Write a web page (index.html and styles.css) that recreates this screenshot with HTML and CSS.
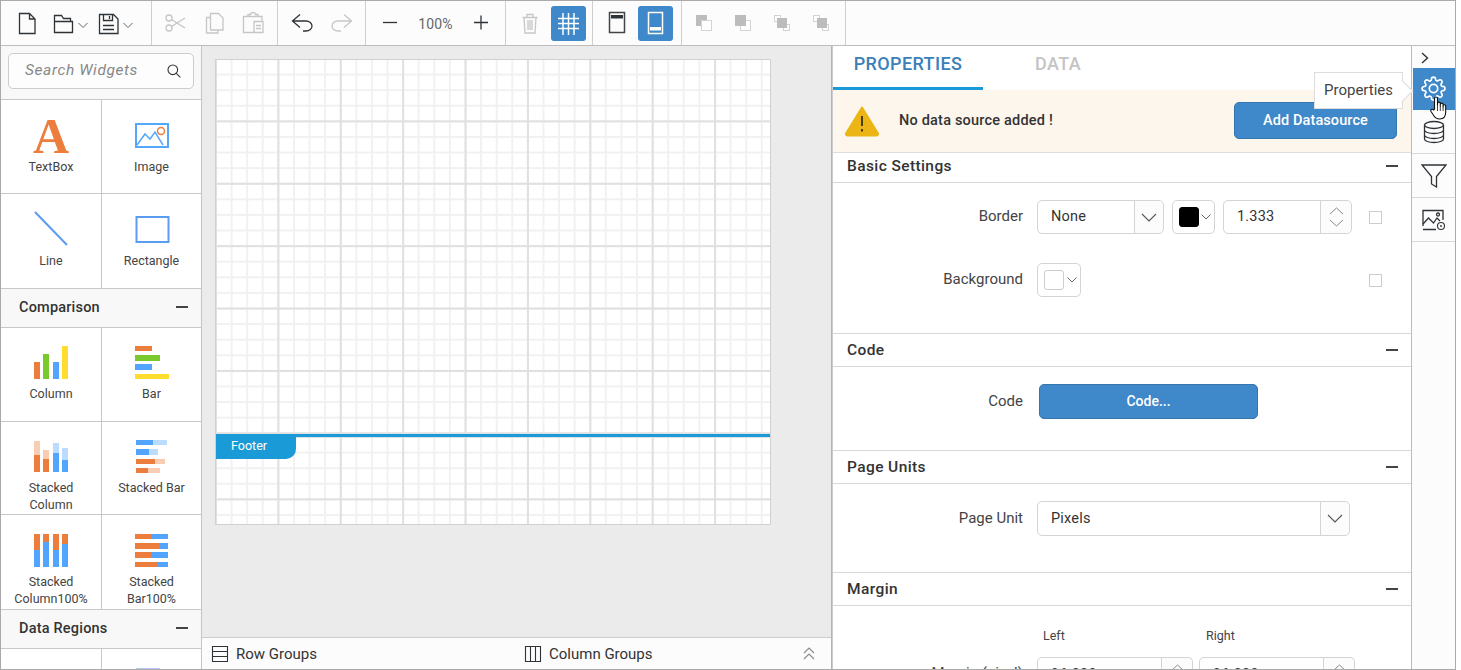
FILE: index.html
```html
<!DOCTYPE html>
<html lang="en">
<head>
    <meta charset="UTF-8">
    <title>Report Designer</title>
    <link rel="stylesheet" href="styles.css">
</head>
<body>
<div class="app">
    <!-- Toolbar -->
    <div class="toolbar">
        <div class="tool-group group-file">
            <div class="tool"><svg width="35" height="35"><path class="ink" d="M9.5 7.5h10l5.5 5.5v14.5H9.5z M19.5 7.5V13H25"/></svg></div>
            <div class="tool tool-drop"><svg width="38" height="35"><path class="ink" d="M2.5 26.5v-17h7l2 3h7v3 M2.5 15.5h18v11h-18z"/><path class="thin" d="M26.5 17l4.5 4.5 4.5-4.5"/></svg></div>
            <div class="tool tool-drop"><svg width="38" height="35"><path class="ink" d="M2.5 8.5h14l4.5 4.5v14.500H2.500z M6.500 8.500v6h9v-6 M12.500 10v3 M6 19.500h11 M6 23.500h11"/><path class="thin" d="M26.500 17l4.500 4.500 4.500-4.500"/></svg></div>
        </div>
        <div class="tool-group group-edit">
            <div class="tool"><svg width="35" height="35"><g class="off"><circle cx="11" cy="12" r="3"/><circle cx="11" cy="22" r="3"/><path d="M13.500 13.500L27 22 M13.500 20.500L27 12"/></g></svg></div>
            <div class="tool"><svg width="35" height="35"><path class="off" d="M13.500 7.500h8l4.500 4.500v12H13.500z M13.500 11.500H9.500v15.500H21v-3"/></svg></div>
            <div class="tool"><svg width="35" height="35"><path class="off" d="M18 26.500H7.500v-16H12v-2h2.500a2.500 2 0 0 1 5 0H22v2h4v4 M12 10.500h10 M18 15.500h9v11h-9z M20 19.500h5 M20 22.500h5"/></svg></div>
        </div>
        <div class="tool-group group-history">
            <div class="tool"><svg width="35" height="35"><path class="ink" d="M15 8.500L7.500 15 15 21.500 M7.500 15H21c3.500 0 6 2.300 6 5s-2.500 5-6 5h-3"/></svg></div>
            <div class="tool"><svg width="35" height="35"><path class="off" d="M20 8.500L27.500 15 20 21.500 M27.500 15H14c-3.500 0-6 2.300-6 5s2.500 5 6 5h3"/></svg></div>
        </div>
        <div class="tool-group group-zoom">
            <div class="tool"><svg width="35" height="35"><path class="ink" d="M10 16.500h14"/></svg></div>
            <span class="zoom-value">100%</span>
            <div class="tool"><svg width="35" height="35"><path class="ink" d="M11 16.500h14 M18 9.500v14"/></svg></div>
        </div>
        <div class="tool-group group-view">
            <div class="tool"><svg width="35" height="35"><path class="off" d="M9.500 11.500h15 M11 11.500l1 15.500h10l1-15.500 M14 8.500h6v3h-6z M15 14v10 M17 14v10 M19 14v10"/></svg></div>
            <div class="tool tool-active"><svg width="35" height="35"><path class="white" d="M7 12.500h21 M7 17.500h21 M7 22.500h21 M12 7v22 M17.500 7v22 M23 7v22"/></svg></div>
        </div>
        <div class="tool-group group-band">
            <div class="tool"><svg width="35" height="35"><rect class="ink-soft" x="9.500" y="6.500" width="15" height="20"/><rect x="11" y="9" width="12" height="3.500" fill="#2e3338"/></svg></div>
            <div class="tool tool-active"><svg width="35" height="35"><rect class="white" x="10.500" y="6.500" width="14" height="21"/><rect x="12" y="21" width="11" height="3.500" fill="#fff"/></svg></div>
        </div>
        <div class="tool-group group-order">
            <div class="tool"><svg width="35" height="35"><rect x="10" y="9" width="11" height="11" fill="#bcbcbc"/><rect class="box" x="15.500" y="14.500" width="10" height="10"/></svg></div>
            <div class="tool"><svg width="35" height="35"><rect class="box" x="15.500" y="14.500" width="10" height="10"/><rect x="10" y="9" width="11" height="11" fill="#bcbcbc"/></svg></div>
            <div class="tool"><svg width="35" height="35"><rect class="box" x="10.500" y="9.500" width="6" height="6"/><rect class="box" x="19.500" y="18.500" width="6" height="6"/><rect x="13" y="12" width="10" height="10" fill="#bcbcbc"/></svg></div>
            <div class="tool"><svg width="35" height="35"><rect class="box" x="10.500" y="9.500" width="6" height="6"/><rect class="box" x="19.500" y="18.500" width="6" height="6"/><rect x="14" y="12" width="10" height="10" fill="#bcbcbc"/></svg></div>
        </div>
    </div>

    <div class="main">
        <!-- Widgets -->
        <div class="widgets">
            <div class="search-wrap">
                <div class="search">
                    <span>Search Widgets</span>
                    <svg width="14" height="14"><circle class="ink-thin" cx="5.800" cy="5.800" r="4.800"/><path class="ink-thin" d="M9.300 9.300l4 4"/></svg>
                </div>
            </div>
            <div class="widget-grid">
                <div class="cell"><div class="icon"><span class="letter-a">A</span></div><span>TextBox</span></div>
                <div class="cell"><div class="icon"><svg width="36" height="36"><rect x="2" y="7" width="32" height="23" fill="none" stroke="#55a7fb" stroke-width="2"/><path d="M3 28l8-11 5 5 5-7 8 13" fill="none" stroke="#55a7fb" stroke-width="1.500"/><circle cx="27" cy="14" r="3.500" fill="none" stroke="#ed7d3c" stroke-width="1.500"/></svg></div><span>Image</span></div>
                <div class="cell cell-tall"><div class="icon"><svg width="36" height="36"><path d="M2 1l32 33" stroke="#5a9cf0" stroke-width="2"/></svg></div><span>Line</span></div>
                <div class="cell cell-tall"><div class="icon"><svg width="36" height="36"><rect x="2.500" y="6" width="32" height="25" fill="none" stroke="#5a9cf0" stroke-width="2"/></svg></div><span>Rectangle</span></div>
            </div>
            <div class="widget-head"><span>Comparison</span><i class="dash"></i></div>
            <div class="widget-grid">
                <div class="cell cell-snug"><div class="icon"><svg width="36" height="36"><rect x="1" y="17" width="6" height="17" fill="#ed7d3c"/><rect x="10" y="9" width="6" height="25" fill="#7ac92d"/><rect x="20" y="17" width="6" height="17" fill="#52a5ff"/><rect x="29" y="1" width="6" height="33" fill="#ffdc2e"/></svg></div><span>Column</span></div>
                <div class="cell cell-snug"><div class="icon"><svg width="36" height="36"><rect x="1" y="1" width="17" height="5" fill="#ed7d3c"/><rect x="1" y="10" width="25" height="6" fill="#7ac92d"/><rect x="1" y="19" width="17" height="6" fill="#52a5ff"/><rect x="1" y="29" width="34" height="5" fill="#ffdc2e"/></svg></div><span>Bar</span></div>
                <div class="cell cell-short cell-snug"><div class="icon"><svg width="36" height="36"><rect x="1" y="2" width="6" height="14" fill="#f8cdb4"/><rect x="1" y="16" width="6" height="17" fill="#ed7d3c"/><rect x="10" y="11" width="6" height="9" fill="#f8cdb4"/><rect x="10" y="20" width="6" height="13" fill="#ed7d3c"/><rect x="20" y="4" width="6" height="10" fill="#bcdcff"/><rect x="20" y="14" width="6" height="19" fill="#52a5ff"/><rect x="29" y="9" width="6" height="12" fill="#bcdcff"/><rect x="29" y="21" width="6" height="12" fill="#52a5ff"/></svg></div><span>Stacked Column</span></div>
                <div class="cell cell-short cell-snug"><div class="icon"><svg width="36" height="36"><rect x="2" y="1" width="17" height="5" fill="#52a5ff"/><rect x="19" y="1" width="14" height="5" fill="#bcdcff"/><rect x="2" y="10" width="13" height="6" fill="#52a5ff"/><rect x="15" y="10" width="9" height="6" fill="#bcdcff"/><rect x="2" y="20" width="19" height="5" fill="#ed7d3c"/><rect x="21" y="20" width="10" height="5" fill="#f8cdb4"/><rect x="2" y="29" width="12" height="5" fill="#ed7d3c"/><rect x="14" y="29" width="12" height="5" fill="#f8cdb4"/></svg></div><span>Stacked Bar</span></div>
                <div class="cell cell-tall"><div class="icon"><svg width="36" height="36"><rect x="1" y="2" width="6" height="16" fill="#ed7d3c"/><rect x="1" y="18" width="6" height="17" fill="#52a5ff"/><rect x="10" y="2" width="6" height="8" fill="#ed7d3c"/><rect x="10" y="10" width="6" height="25" fill="#52a5ff"/><rect x="20" y="2" width="6" height="16" fill="#ed7d3c"/><rect x="20" y="18" width="6" height="17" fill="#52a5ff"/><rect x="29" y="2" width="6" height="10" fill="#ed7d3c"/><rect x="29" y="12" width="6" height="23" fill="#52a5ff"/></svg></div><span>Stacked Column100%</span></div>
                <div class="cell cell-tall"><div class="icon"><svg width="36" height="36"><rect x="1" y="2" width="16" height="5" fill="#ed7d3c"/><rect x="17" y="2" width="17" height="5" fill="#52a5ff"/><rect x="1" y="11" width="25" height="6" fill="#ed7d3c"/><rect x="26" y="11" width="8" height="6" fill="#52a5ff"/><rect x="1" y="20" width="16" height="6" fill="#ed7d3c"/><rect x="17" y="20" width="17" height="6" fill="#52a5ff"/><rect x="1" y="30" width="22" height="5" fill="#ed7d3c"/><rect x="23" y="30" width="11" height="5" fill="#52a5ff"/></svg></div><span>Stacked Bar100%</span></div>
            </div>
            <div class="widget-head"><span>Data Regions</span><i class="dash"></i></div>
            <div class="widget-grid">
                <div class="cell"></div>
                <div class="cell"><div class="icon"><svg width="36" height="36"><rect x="2" y="2" width="24" height="20" fill="#b9c8f5"/></svg></div></div>
            </div>
        </div>

        <!-- Design surface -->
        <div class="center">
            <div class="canvas-wrap">
                <div class="surface">
                    <div class="band band-body"></div>
                    <div class="band band-footer"><div class="footer-tab">Footer</div></div>
                </div>
            </div>
            <div class="groups-bar">
                <div class="group-item group-row">
                    <svg width="18" height="18"><path class="ink-thin" d="M1.500 1.500h15v15h-15z M1.500 6.500h15 M1.500 11.500h15"/></svg>
                    <span>Row Groups</span>
                </div>
                <div class="group-item group-col">
                    <svg width="18" height="18"><path class="ink-thin" d="M1.500 1.500h15v15h-15z M6.500 1.500v15 M11.500 1.500v15"/></svg>
                    <span>Column Groups</span>
                    <svg class="collapse" width="12" height="14"><path d="M1 6l5-5 5 5 M1 12l5-5 5 5" fill="none" stroke="#8c8c8c" stroke-width="1.200"/></svg>
                </div>
            </div>
        </div>

        <!-- Properties -->
        <div class="props">
            <div class="tabs">
                <div class="tab tab-on">PROPERTIES</div>
                <div class="tab">DATA</div>
            </div>
            <div class="notice">
                <svg width="36" height="32"><path d="M18 2.500L34 28.500a1.500 1.500 0 0 1-1.300 2H3.300a1.500 1.500 0 0 1-1.300-2z" fill="#ecb516" stroke="#ecb516" stroke-width="2" stroke-linejoin="round"/><path d="M18 11v10 M18 24v2.500" stroke="#3a3010" stroke-width="1.800"/></svg>
                <span class="notice-text">No data source added !</span>
                <div class="btn btn-add">Add Datasource</div>
            </div>

            <div class="sec-head sec-head-first"><span>Basic Settings</span><i class="dash"></i></div>
            <div class="sec-body sec-basic">
                <div class="row row-border">
                    <label>Border</label>
                    <div class="field combo combo-border"><span>None</span><b><svg width="16" height="9"><path d="M1 1l7 7 7-7" fill="none" stroke="#555" stroke-width="1.100"/></svg></b></div>
                    <div class="field swatch"><i class="chip chip-black"></i><svg width="10" height="6"><path d="M.5.500l4.500 4.500 4.500-4.500" fill="none" stroke="#666"/></svg></div>
                    <div class="field spin spin-border"><span>1.333</span><b><svg width="15" height="8"><path d="M1 7l6.500-6 6.500 6" fill="none" stroke="#888"/></svg><svg width="15" height="8"><path d="M1 1l6.500 6 6.500-6" fill="none" stroke="#888"/></svg></b></div>
                    <i class="check"></i>
                </div>
                <div class="row row-bg">
                    <label>Background</label>
                    <div class="field swatch swatch-wide"><i class="chip"></i><svg width="10" height="6"><path d="M.5.500l4.500 4.500 4.500-4.500" fill="none" stroke="#666"/></svg></div>
                    <i class="check check-bg"></i>
                </div>
            </div>

            <div class="sec-head"><span>Code</span><i class="dash"></i></div>
            <div class="sec-body sec-code">
                <div class="row">
                    <label>Code</label>
                    <div class="btn btn-code">Code...</div>
                </div>
            </div>

            <div class="sec-head"><span>Page Units</span><i class="dash"></i></div>
            <div class="sec-body sec-units">
                <div class="row">
                    <label>Page Unit</label>
                    <div class="field combo combo-unit"><span>Pixels</span><b><svg width="16" height="9"><path d="M1 1l7 7 7-7" fill="none" stroke="#555" stroke-width="1.100"/></svg></b></div>
                </div>
            </div>

            <div class="sec-head"><span>Margin</span><i class="dash"></i></div>
            <div class="sec-body sec-margin">
                <div class="margin-labels"><span>Left</span><span>Right</span></div>
                <div class="row row-margin">
                    <label>Margin (pixel)</label>
                    <div class="field spin spin-margin"><span>96.000</span><b><svg width="15" height="8"><path d="M1 7l6.500-6 6.500 6" fill="none" stroke="#888"/></svg></b></div>
                    <div class="field spin spin-margin"><span>96.000</span><b><svg width="15" height="8"><path d="M1 7l6.500-6 6.500 6" fill="none" stroke="#888"/></svg></b></div>
                </div>
            </div>
        </div>

        <!-- Right rail -->
        <div class="rail">
            <div class="rail-top"><svg width="8" height="12"><path d="M1 1l5.500 5-5.500 5" fill="none" stroke="#2e3338" stroke-width="1.400"/></svg></div>
            <div class="rail-item rail-on">
                <svg width="25" height="25" viewBox="0 0 24 24" fill="none" stroke="#fff" stroke-width="1.600"><circle cx="12" cy="12" r="4"/><path d="M19.400 15a1.650 1.650 0 0 0 .33 1.820l.06.06a2 2 0 0 1 0 2.830 2 2 0 0 1-2.830 0l-.06-.06a1.650 1.650 0 0 0-1.820-.33 1.650 1.650 0 0 0-1 1.510V21a2 2 0 0 1-2 2 2 2 0 0 1-2-2v-.09A1.650 1.650 0 0 0 9 19.400a1.650 1.650 0 0 0-1.820.33l-.06.06a2 2 0 0 1-2.830 0 2 2 0 0 1 0-2.830l.06-.06a1.650 1.650 0 0 0 .33-1.820 1.650 1.650 0 0 0-1.510-1H3a2 2 0 0 1-2-2 2 2 0 0 1 2-2h.09A1.650 1.650 0 0 0 4.600 9a1.650 1.650 0 0 0-.33-1.820l-.06-.06a2 2 0 0 1 0-2.830 2 2 0 0 1 2.830 0l.06.06a1.650 1.650 0 0 0 1.820.33H9a1.650 1.650 0 0 0 1-1.510V3a2 2 0 0 1 2-2 2 2 0 0 1 2 2v.09a1.650 1.650 0 0 0 1 1.510 1.650 1.650 0 0 0 1.820-.33l.06-.06a2 2 0 0 1 2.830 0 2 2 0 0 1 0 2.830l-.06.06a1.650 1.650 0 0 0-.33 1.820V9a1.650 1.650 0 0 0 1.510 1H21a2 2 0 0 1 2 2 2 2 0 0 1-2 2h-.09a1.650 1.650 0 0 0-1.510 1z"/></svg>
            </div>
            <div class="rail-item">
                <svg width="22" height="24"><g class="ink"><ellipse cx="11" cy="5" rx="9.500" ry="3.500"/><path d="M1.500 5v14c0 2 4.300 3.500 9.500 3.500s9.500-1.500 9.500-3.500V5 M1.500 10c0 2 4.300 3.500 9.500 3.500s9.500-1.500 9.500-3.500 M1.500 15c0 2 4.300 3.500 9.500 3.500s9.500-1.500 9.500-3.500"/></g></svg>
            </div>
            <div class="rail-item">
                <svg width="26" height="24"><path class="ink" d="M1 1h24l-9.500 11.500V23l-5-3v-7.500z"/></svg>
            </div>
            <div class="rail-item">
                <svg width="24" height="22"><path class="ink" d="M1 17V1.500h20V11 M1 20.500h13"/><path class="ink" d="M1 15l5.500-6 5 5 3.500-5 3 3"/><circle class="ink" cx="16" cy="5.500" r="1.500"/><circle class="ink-thin" cx="19" cy="17" r="3.500"/><circle cx="19" cy="17" r="1" fill="#444"/></svg>
            </div>
            <div class="rail-rest"></div>
        </div>
    </div>

    <!-- Tooltip and mouse pointer over the rail -->
    <div class="tooltip">Properties</div>
    <svg class="hand" width="18" height="24" viewBox="0 0 18 24"><path d="M4.500 13V2.500a1.500 1.500 0 0 1 3 0V9l0-1.500a1.400 1.400 0 0 1 2.800 0V10l0-1.500a1.400 1.400 0 0 1 2.800 0V11l0-1a1.300 1.300 0 0 1 2.600 0v6c0 4-2 7-6 7-3 0-4.500-1-6-3.500L1 15.500c-1-1.700 1.500-3.300 2.500-1.500z" fill="#fff" stroke="#111" stroke-width="1.100" stroke-linejoin="round"/><path d="M7.500 9v6 M10.300 10v5 M13.100 11v4" stroke="#111" stroke-width=".8"/></svg>
</div>
</body>
</html>
```

FILE: styles.css
```css
* {
    box-sizing: border-box;
}
body {
    margin: 0;
    background-color: #fff;
    color: #333;
    font-family: Roboto, "Liberation Sans", sans-serif;
    font-size: 15px;
    overflow: hidden;
}
.app {
    position: relative;
    display: flex;
    flex-direction: column;
    width: 1456px;
    height: 670px;
    border: 1px solid #aaa;
    overflow: hidden;
}

/* svg stroke helpers */
.ink, .ink-soft, .ink-thin, .thin, .off, .off *, .white, .box {
    fill: none;
}
.ink { stroke: #2e3338; stroke-width: 1.300; }
.ink-soft { stroke: #444; stroke-width: 1.500; }
.ink-thin { stroke: #2e3338; stroke-width: 1.100; }
.thin { stroke: #666; stroke-width: 1; }
.off { stroke: #c6c6c6; stroke-width: 1.300; }
.white { stroke: #fff; stroke-width: 1.500; }
.box { stroke: #d4d4d4; stroke-width: 1; fill: #fff; }

/* toolbar */
.toolbar {
    display: flex;
    flex: none;
    height: 45px;
    background-color: #fcfcfc;
    border-bottom: 1px solid #bdbdbd;
}
.tool-group {
    display: flex;
    align-items: center;
    height: 44px;
    padding-top: 1px;
    border-right: 1px solid #cfcfcf;
}
.tool {
    flex: none;
    width: 35px;
    height: 35px;
    border-radius: 3px;
}
.tool svg {
    display: block;
}
.tool-drop {
    width: 38px;
}
.tool-active {
    background-color: #3f88c9;
}
.group-file { width: 151px; padding-left: 9px; gap: 14px; }
.group-file .tool-drop { margin-left: -7px; }
.group-edit { width: 126px; padding-left: 6px; gap: 4px; }
.group-history { width: 88px; padding-left: 7px; gap: 4px; }
.group-zoom { width: 140px; padding: 1px 7px 0; justify-content: space-between; }
.group-view { width: 87px; padding-left: 7px; gap: 3px; }
.group-band { width: 89px; padding-left: 7px; gap: 3px; }
.group-order { width: 164px; padding-left: 4px; gap: 4px; }
.zoom-value {
    color: #666;
    font-size: 14px;
    letter-spacing: .2px;
}

/* layout */
.main {
    display: flex;
    flex: 1;
    min-height: 0;
}

/* widgets panel */
.widgets {
    flex: none;
    width: 201px;
    border-right: 1px solid #c4c4c4;
    background-color: #fff;
    overflow: hidden;
}
.search-wrap {
    height: 54px;
    padding: 7px 7px 0;
    background-color: #f8f8f8;
    border-bottom: 1px solid #c8c8c8;
}
.search {
    display: flex;
    align-items: center;
    justify-content: space-between;
    height: 36px;
    padding: 0 12px 0 16px;
    background-color: #fdfdfd;
    border: 1px solid #ccc;
    border-radius: 5px;
    color: #888;
    font-size: 15.500px;
    font-style: italic;
    letter-spacing: .6px;
}
.search span {
    padding-bottom: 2px;
}
.widget-grid {
    display: grid;
    grid-template-columns: 101px 99px;
}
.cell {
    display: flex;
    flex-direction: column;
    align-items: center;
    height: 94px;
    padding: 17px 12px 0;
    border-bottom: 1px solid #c8c8c8;
    font-size: 12.500px;
    line-height: 17px;
    text-align: center;
    color: #444;
}
.cell:nth-child(odd) {
    border-right: 1px solid #c8c8c8;
}
.cell-short {
    height: 93px;
}
.cell-tall {
    height: 95px;
}
.icon {
    display: flex;
    justify-content: center;
    flex: none;
    width: 36px;
    height: 36px;
    margin-bottom: 5px;
}
.cell-snug .icon {
    margin-bottom: 4px;
}
.letter-a {
    margin-top: 1px;
    color: #ed7d3c;
    font-family: "Liberation Serif", serif;
    font-size: 50px;
    font-weight: 700;
    line-height: 36px;
}
.widget-head {
    display: flex;
    align-items: center;
    justify-content: space-between;
    height: 39px;
    padding: 0 13px 2px 18px;
    background-color: #f8f8f8;
    border-bottom: 1px solid #c8c8c8;
    font-size: 14.500px;
    font-weight: 500;
    letter-spacing: .2px;
}
.dash {
    display: block;
    width: 12px;
    height: 1.500px;
    background-color: #444;
}

/* design surface */
.center {
    display: flex;
    flex-direction: column;
    flex: none;
    width: 630px;
    border-right: 1px solid #b4b4b4;
}
.canvas-wrap {
    flex: 1;
    padding: 13px;
    background-color: #ebebeb;
}
.surface {
    display: flex;
    flex-direction: column;
    width: 556px;
    height: 466px;
    background-color: #fff;
    border: 1px solid #d0d0d0;
}
.band {
    background-image:
        linear-gradient(to right, #e0e0e0 2px, transparent 2px),
        linear-gradient(to bottom, #e0e0e0 2px, transparent 2px),
        linear-gradient(to right, #f1f1f1 2px, transparent 2px),
        linear-gradient(to bottom, #f1f1f1 2px, transparent 2px);
    background-size: 62.400px 62.400px, 62.400px 62.400px, 15.600px 15.600px, 15.600px 15.600px;
}
.band-body {
    height: 374px;
    background-position: -1px -2px;
}
.band-footer {
    position: relative;
    flex: 1;
    border-top: 3px solid #1a9bd7;
    background-position: -1px -1px;
}
.footer-tab {
    position: absolute;
    top: -3px;
    left: 0;
    width: 80px;
    height: 25px;
    padding: 4px 0 0 15px;
    background-color: #1a9bd7;
    border-bottom-right-radius: 10px;
    color: #fff;
    font-size: 12.500px;
}
.groups-bar {
    display: flex;
    align-items: center;
    flex: none;
    height: 32px;
    background-color: #fcfcfc;
    border-top: 1px solid #ccc;
}
.group-item {
    display: flex;
    align-items: center;
    gap: 7px;
}
.group-row {
    width: 322px;
    padding-left: 9px;
}
.group-col {
    flex: 1;
    padding-right: 16px;
}
.collapse {
    margin-left: auto;
}

/* properties */
.props {
    flex: none;
    width: 580px;
    border-left: 1px solid #ccc;
    border-right: 1px solid #bbb;
    background-color: #fff;
    overflow: hidden;
}
.tabs {
    display: flex;
    height: 44px;
}
.tab {
    width: 150px;
    padding-top: 7px;
    color: #c4c4c4;
    font-size: 18px;
    font-weight: 500;
    text-align: center;
    letter-spacing: .4px;
}
.tab-on {
    color: #3a80ba;
    border-bottom: 3px solid #1a9bd7;
}
.notice {
    display: flex;
    align-items: center;
    height: 63px;
    padding: 0 14px 1px 11px;
    background-color: #fdf6ec;
    border-bottom: 1px solid #ddd;
}
.notice-text {
    margin-left: 19px;
    font-size: 14.500px;
    font-weight: 500;
    letter-spacing: .2px;
}
.btn {
    display: flex;
    align-items: center;
    justify-content: center;
    padding-bottom: 1px;
    background-color: #3f88c9;
    border: 1px solid #3575ad;
    border-radius: 5px;
    color: #fff;
    font-size: 14px;
    font-weight: 500;
}
.btn-add {
    width: 163px;
    height: 37px;
    margin-left: auto;
    font-size: 14.500px;
    letter-spacing: .1px;
}
.btn-code {
    width: 219px;
    height: 35px;
    margin-left: 2px;
}
.sec-head {
    display: flex;
    align-items: center;
    justify-content: space-between;
    height: 33px;
    padding: 0 13px 0 14px;
    border-bottom: 1px solid #d8d8d8;
    font-size: 15.500px;
    font-weight: 500;
    letter-spacing: .4px;
}
.sec-head-first {
    height: 30px;
    padding-bottom: 3px;
}
.sec-body {
    padding-top: 17px;
    border-bottom: 1px solid #d8d8d8;
}
.sec-basic { height: 151px; }
.sec-code { height: 84px; }
.sec-units { height: 89px; }
.sec-margin { height: 80px; padding-top: 21px; border-bottom: none; }
.row {
    display: flex;
    align-items: center;
    gap: 8px;
}
.row label {
    flex: none;
    width: 190px;
    margin-right: 6px;
    padding-bottom: 1px;
    text-align: right;
    color: #444;
    font-size: 15px;
}
.sec-basic .row label {
    padding-bottom: 3px;
}
.row-bg {
    margin-top: 29px;
}
.field {
    display: flex;
    flex: none;
    align-items: center;
    height: 34px;
    background-color: #fff;
    border: 1px solid #d4d4d4;
    border-radius: 5px;
}
.combo span, .spin span {
    flex: 1;
    padding: 0 0 1px 13px;
    font-size: 14.500px;
    letter-spacing: .2px;
}
.combo b, .spin b {
    display: flex;
    flex: none;
    flex-direction: column;
    align-items: center;
    justify-content: center;
    gap: 4px;
    height: 100%;
    background-color: #fcfcfc;
    border-left: 1px solid #d4d4d4;
    border-radius: 0 5px 5px 0;
}
.combo b { width: 29px; }
.spin b { width: 31px; }
.combo-border { width: 127px; }
.combo-unit { width: 313px; height: 35px; }
.swatch {
    justify-content: space-between;
    width: 43px;
    padding: 0 3px 0 6px;
}
.swatch-wide {
    width: 44px;
}
.chip {
    display: block;
    width: 20px;
    height: 20px;
    background-color: #fff;
    border: 1px solid #ccc;
    border-radius: 3px;
}
.chip-black {
    background-color: #000;
    border-color: #000;
}
.spin-border { width: 129px; }
.spin-margin { width: 156px; border-bottom: none; }
.spin-margin + .spin-margin { margin-left: -2px; }
.spin-margin b { justify-content: flex-start; padding-top: 6px; }
.check {
    display: block;
    width: 13px;
    height: 13px;
    margin-left: 9px;
    border: 1px solid #ccc;
}
.check-bg {
    margin-left: 280px;
}
.margin-labels {
    display: flex;
    padding: 1px 0 0 210px;
    font-size: 12.500px;
    color: #444;
}
.margin-labels span {
    width: 163px;
}
.row-margin {
    margin-top: 14px;
    align-items: flex-start;
}
.row-margin label {
    padding-top: 7px;
}

/* right rail */
.rail {
    display: flex;
    flex-direction: column;
    flex: 1;
    background-color: #fcfcfc;
}
.rail-top {
    height: 22px;
    padding: 4px 0 0 9px;
}
.rail-item {
    display: flex;
    align-items: center;
    justify-content: center;
    flex: none;
    height: 44px;
    border-bottom: 1px solid #d8d8d8;
}
.rail-on {
    height: 42px;
    margin-left: 1px;
    padding: 0 2px 2px 0;
    background-color: #3f88c9;
    border-bottom: none;
}

/* overlays */
.tooltip {
    position: absolute;
    top: 71px;
    left: 1313px;
    width: 89px;
    height: 37px;
    padding-left: 9px;
    background-color: #fff;
    border: 1px solid #ddd;
    line-height: 35px;
    color: #444;
}
.tooltip::after {
    content: "";
    position: absolute;
    top: 10px;
    right: -8px;
    width: 15px;
    height: 15px;
    background-color: #fff;
    border-top: 1px solid #ddd;
    border-right: 1px solid #ddd;
    transform: rotate(45deg);
}
.hand {
    position: absolute;
    top: 95px;
    left: 1429px;
}
```
